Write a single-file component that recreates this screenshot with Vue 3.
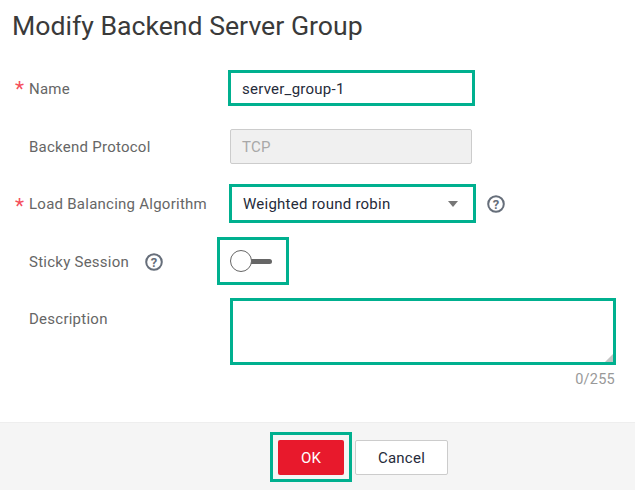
<template>
    <div class="dialog">
        <h1 class="title">Modify Backend Server Group</h1>
        <div class="form">
            <div class="row row-name">
                <label class="label label-name"><span class="star">*</span>Name</label>
                <div class="mark mark-name">
                    <span class="value">server_group-1</span>
                </div>
            </div>
            <div class="row row-protocol">
                <label class="label">Backend Protocol</label>
                <div class="disabled-input">TCP</div>
            </div>
            <div class="row row-algo">
                <label class="label"><span class="star">*</span>Load Balancing Algorithm</label>
                <div class="mark mark-select">
                    <span class="select-value">Weighted round robin</span>
                    <span class="caret"></span>
                </div>
                <svg class="help help-algo" width="18" height="18" viewBox="0 0 18 18">
                    <circle cx="9" cy="9" r="7.8" fill="none" stroke="#666e7a" stroke-width="2" />
                    <text x="9" y="13.5" text-anchor="middle" class="help-mark">?</text>
                </svg>
            </div>
            <div class="row row-sticky">
                <label class="label label-sticky">
                    Sticky Session
                    <svg class="help help-sticky" width="18" height="18" viewBox="0 0 18 18">
                        <circle cx="9" cy="9" r="7.8" fill="none" stroke="#666e7a" stroke-width="2" />
                        <text x="9" y="13.5" text-anchor="middle" class="help-mark">?</text>
                    </svg>
                </label>
                <div class="mark mark-toggle">
                    <span class="knob"></span>
                    <span class="bar"></span>
                </div>
            </div>
            <div class="row row-desc">
                <label class="label label-desc">Description</label>
                <div class="desc-col">
                    <div class="mark mark-desc">
                        <svg class="grip" width="8" height="8" viewBox="0 0 8 8">
                            <polygon points="8,0 8,8 0,8" fill="#c4c4c4" />
                        </svg>
                    </div>
                    <div class="count">0/255</div>
                </div>
            </div>
        </div>
        <div class="footer">
            <div class="mark mark-ok">
                <button class="btn btn-ok">OK</button>
            </div>
            <button class="btn btn-cancel">Cancel</button>
        </div>
    </div>
</template>

<script setup>
</script>

<style>
html,
body {
    margin: 0;
    background: #fff;
}
</style>

<style scoped>
.dialog {
    width: 635px;
    height: 490px;
    display: flex;
    flex-direction: column;
    font-family: Roboto, "Liberation Sans", sans-serif;
    font-size: 15px;
    color: #666;
    overflow: hidden;
    background: #fff;
}

.title {
    margin: 0;
    padding: 9px 0 0 12px;
    height: 61px;
    font-size: 26.65px;
    font-weight: 400;
    line-height: 34px;
    color: #3a3a3a;
}

.form {
    flex: 1;
}

.row {
    display: flex;
    align-items: center;
}

.row-protocol {
    margin-top: 23px;
}

.row-algo {
    margin-top: 20px;
}

.row-sticky {
    margin-top: 14px;
}

.row-desc {
    margin-top: 13px;
    align-items: flex-start;
}

.label {
    box-sizing: border-box;
    width: 217px;
    padding-left: 29px;
    position: relative;
    color: #666;
    line-height: 20px;
    letter-spacing: 0.25px;
}

.label-name {
    padding-top: 2px;
}

.star {
    position: absolute;
    left: 15px;
    top: 2px;
    color: #f5505c;
    font-size: 21px;
    line-height: 20px;
}

.mark {
    box-sizing: border-box;
    border: 3px solid #00b08f;
    background: #fff;
}

.mark-name {
    width: 247px;
    height: 36px;
    margin-left: 11px;
    padding-left: 11px;
    display: flex;
    align-items: center;
}

.value,
.select-value {
    color: #252b3a;
    letter-spacing: 0.25px;
}

.value {
    padding-top: 1px;
}

.disabled-input {
    box-sizing: border-box;
    width: 242px;
    height: 35px;
    margin-left: 13px;
    padding-left: 11px;
    display: flex;
    align-items: center;
    background: #f0f0f0;
    border: 1px solid #ccc;
    border-radius: 2px;
    color: #a8a8a8;
    letter-spacing: 0.25px;
}

.mark-select {
    width: 247px;
    height: 39px;
    margin-left: 12px;
    padding: 0 15px 0 11px;
    display: flex;
    align-items: center;
    justify-content: space-between;
}

.caret {
    width: 0;
    height: 0;
    border-left: 5.5px solid transparent;
    border-right: 5.5px solid transparent;
    border-top: 6px solid #777;
}

.help {
    flex: none;
}

.help-mark {
    font-family: Roboto, "Liberation Sans", sans-serif;
    font-size: 13px;
    font-weight: 700;
    fill: #666e7a;
}

.help-algo {
    margin-left: 11px;
}

.label-sticky {
    display: flex;
    align-items: center;
    padding-top: 2px;
}

.help-sticky {
    margin-left: 16px;
}

.mark-toggle {
    width: 72px;
    height: 48px;
    padding-left: 10px;
    display: flex;
    align-items: center;
}

.knob {
    box-sizing: border-box;
    width: 22px;
    height: 22px;
    border: 1px solid #666;
    border-radius: 50%;
    background: #fff;
    position: relative;
    z-index: 1;
}

.bar {
    width: 21px;
    height: 5px;
    margin-left: -1px;
    background: #666;
    border-radius: 0 3px 3px 0;
}

.label-desc {
    padding-top: 11px;
}

.desc-col {
    margin-left: 13px;
    width: 386px;
}

.mark-desc {
    width: 386px;
    height: 67px;
    position: relative;
}

.grip {
    position: absolute;
    right: 0;
    bottom: 0;
}

.count {
    margin-top: 6px;
    padding-right: 1px;
    text-align: right;
    color: #999;
    font-size: 14.5px;
    line-height: 18px;
    letter-spacing: 0.25px;
}

.footer {
    box-sizing: border-box;
    height: 68px;
    padding: 9px 0 0 270px;
    display: flex;
    align-items: flex-start;
    gap: 3px;
    background: #f5f5f5;
    border-top: 1px solid #eee;
}

.mark-ok {
    width: 82px;
    height: 50px;
    padding: 5px;
    background: #f5f5f5;
}

.btn {
    box-sizing: border-box;
    height: 35px;
    border-radius: 2px;
    font-family: inherit;
    font-size: 15px;
    letter-spacing: 0.25px;
    padding: 0;
}

.btn-ok {
    width: 66px;
    border: none;
    background: #e8192c;
    color: #fff;
    font-weight: 400;
}

.btn-cancel {
    width: 93px;
    margin-top: 8px;
    background: #fff;
    border: 1px solid #ccc;
    color: #252b3a;
}
</style>
